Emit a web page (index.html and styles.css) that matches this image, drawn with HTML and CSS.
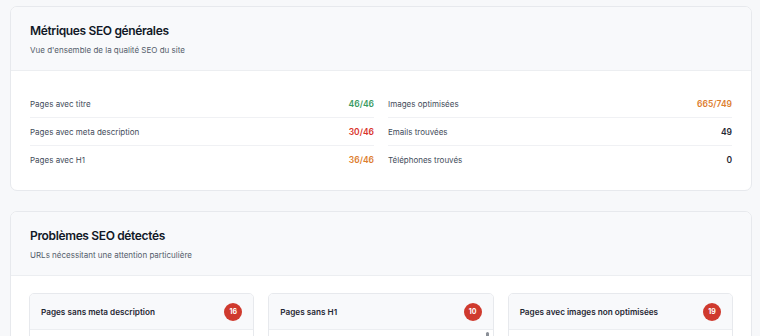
FILE: index.html
```html
<!DOCTYPE html>
<html lang="fr">
<head>
<meta charset="utf-8">
<link rel="stylesheet" href="styles.css">
</head>
<body>
<div class="page">
  <section class="card">
    <header class="card-head">
      <h2 class="card-title">Métriques SEO générales</h2>
      <p class="card-sub">Vue d'ensemble de la qualité SEO du site</p>
    </header>
    <div class="card-body metrics">
      <div class="col">
        <div class="row"><span class="label">Pages avec titre</span><span class="val green">46/46</span></div>
        <div class="row"><span class="label">Pages avec meta description</span><span class="val red">30/46</span></div>
        <div class="row"><span class="label">Pages avec H1</span><span class="val orange">36/46</span></div>
      </div>
      <div class="col">
        <div class="row"><span class="label">Images optimisées</span><span class="val orange">665/749</span></div>
        <div class="row"><span class="label">Emails trouvées</span><span class="val">49</span></div>
        <div class="row"><span class="label">Téléphones trouvés</span><span class="val">0</span></div>
      </div>
    </div>
  </section>

  <section class="card">
    <header class="card-head">
      <h2 class="card-title">Problèmes SEO détectés</h2>
      <p class="card-sub">URLs nécessitant une attention particulière</p>
    </header>
    <div class="card-body issues">
      <div class="issue">
        <div class="issue-head"><span class="issue-title">Pages sans meta description</span><span class="badge">16</span></div>
        <div class="issue-body"></div>
      </div>
      <div class="issue">
        <div class="issue-head"><span class="issue-title">Pages sans H1</span><span class="badge">10</span></div>
        <div class="issue-body"><span class="thumb"></span></div>
      </div>
      <div class="issue">
        <div class="issue-head"><span class="issue-title">Pages avec images non optimisées</span><span class="badge">19</span></div>
        <div class="issue-body"></div>
      </div>
    </div>
  </section>
</div>
</body>
</html>
```

FILE: styles.css
```css
* { box-sizing: border-box; }
html, body { margin: 0; padding: 0; }
body {
  background: #f7f8fa;
  font-family: Inter, "Noto Sans", "Liberation Sans", sans-serif;
  color: #111827;
  overflow: hidden;
  height: 336px;
}
.page {
  padding: 6px 8px 0 10px;
  display: flex;
  flex-direction: column;
  gap: 20px;
}
.card {
  background: #fff;
  border: 1px solid #e7e9ed;
  border-radius: 7px;
  overflow: hidden;
}
.card-head {
  background: #f8f9fb;
  border-bottom: 1px solid #eceef1;
  height: 64px;
  padding: 16px 19px 0;
}
.card-title {
  margin: 0;
  font-size: 12px;
  font-weight: 600;
  line-height: 16px;
  color: #111827;
  letter-spacing: -0.35px;
}
.card-sub {
  margin: 5px 0 0;
  font-size: 8px;
  line-height: 12px;
  color: #545d6b;
}
.card-body { padding: 19px 19px 16px; }
.metrics {
  display: grid;
  grid-template-columns: 1fr 1fr;
  column-gap: 14px;
}
.row {
  height: 28px;
  display: flex;
  align-items: center;
  justify-content: space-between;
  border-bottom: 1px solid #f0f1f4;
  font-size: 8px;
}
.row:last-child { border-bottom: none; }
.label { color: #434c5a; }
.val { font-weight: 600; color: #1f2733; font-size: 8.5px; }
.green { color: #3a9a62; }
.red { color: #d9342b; }
.orange { color: #dd7d2e; }
.issues {
  display: grid;
  grid-template-columns: repeat(3, 1fr);
  column-gap: 14px;
  padding: 17px 18px 0;
}
.issue {
  border: 1px solid #e7e9ed;
  border-radius: 5px;
  overflow: hidden;
  height: 80px;
}
.issue-head {
  height: 36px;
  background: #f8f9fb;
  border-bottom: 1px solid #eceef1;
  display: flex;
  align-items: center;
  justify-content: space-between;
  padding: 0 11px 0 11px;
}
.issue-title {
  font-size: 8.2px;
  font-weight: 600;
  color: #1f2733;
}
.badge {
  width: 18px;
  height: 18px;
  border-radius: 50%;
  background: #cf3a2e;
  color: #fff;
  font-size: 7px;
  font-weight: 700;
  display: flex;
  align-items: center;
  justify-content: center;
}
.issue-body { position: relative; height: 44px; }
.thumb {
  position: absolute;
  right: 4px;
  top: 2px;
  width: 3px;
  height: 20px;
  border-radius: 2px;
  background: #8a8f97;
}
```
